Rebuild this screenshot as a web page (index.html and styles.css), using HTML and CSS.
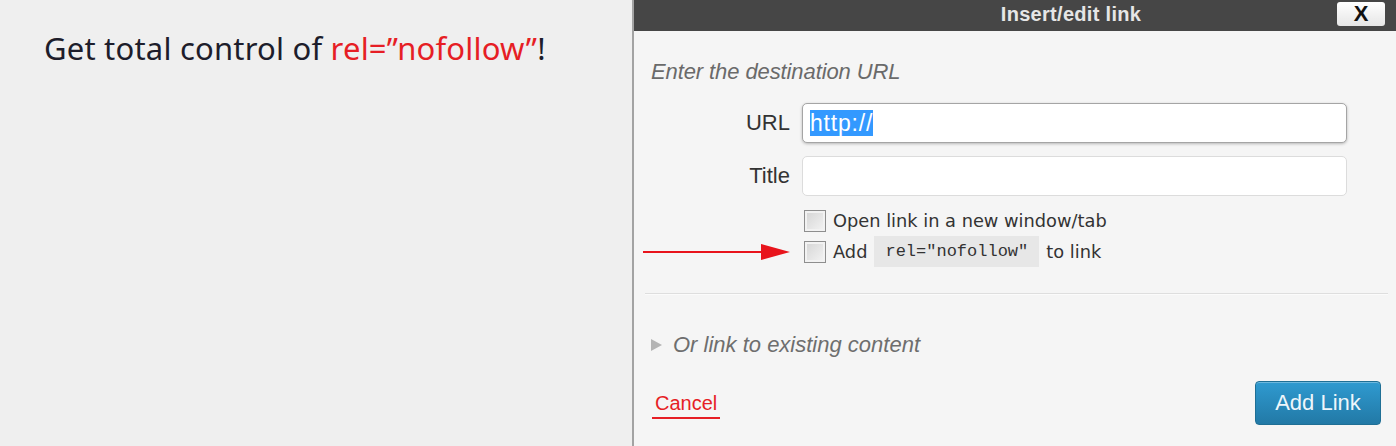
FILE: index.html
```html
<!DOCTYPE html>
<html lang="en">
<head>
    <meta charset="UTF-8">
    <meta name="viewport" content="width=device-width, initial-scale=1.0">
    <title>Insert/edit link</title>
    <link rel="stylesheet" href="styles.css">
</head>
<body>
    <div class="page">
        <div class="pitch">
            <h1>Get total control of <span class="hot">rel=”nofollow”</span>!</h1>
        </div>

        <div class="dialog">
            <div class="titlebar">
                <span class="title">Insert/edit link</span>
                <button class="close">X</button>
            </div>

            <div class="body">
                <p class="intro">Enter the destination URL</p>

                <div class="fields">
                    <label class="fieldLabel">URL</label>
                    <div class="input focused"><span class="selected">http://</span></div>
                    <label class="fieldLabel">Title</label>
                    <div class="input"></div>
                </div>

                <div class="checks">
                    <div class="pointer"></div>
                    <div class="checkRow"><span class="box"></span>Open link in a new window/tab</div>
                    <div class="pointer">
                        <!-- red arrow pointing at the nofollow option -->
                        <svg width="147" height="18" viewBox="0 0 147 18">
                            <line x1="0" y1="9" x2="122" y2="9" stroke="#e8141c" stroke-width="2"/>
                            <polygon points="118,1 147,9 118,17" fill="#e8141c"/>
                        </svg>
                    </div>
                    <div class="checkRow"><span class="box"></span>Add <code>rel="nofollow"</code> to link</div>
                </div>

                <hr class="divider">

                <div class="toggle"><span class="tri"></span>Or link to existing content</div>

                <div class="footer">
                    <a class="cancel" href="#">Cancel</a>
                    <button class="submit">Add Link</button>
                </div>
            </div>
        </div>
    </div>
</body>
</html>
```

FILE: styles.css
```css
* {
    box-sizing: border-box;
}

body {
    margin: 0;
    background: #efefef;
    font-family: "Liberation Sans", Arial, sans-serif;
}

.page {
    display: flex;
    height: 446px;
}

.pitch {
    width: 632px;
    padding: 29px 0 0 44px;
}

.pitch h1 {
    margin: 0;
    font-family: "Noto Sans", "Open Sans", sans-serif;
    font-weight: normal;
    font-size: 31px;
    line-height: 38px;
    color: #1d1d2b;
    letter-spacing: 0.2px;
}

.hot {
    color: #e61e25;
}

.dialog {
    flex: 1;
    background: #f5f5f5;
    border-left: 2px solid #a3a3a3;
    display: flex;
    flex-direction: column;
}

.titlebar {
    height: 31px;
    background: #464646;
    display: flex;
    align-items: flex-start;
    justify-content: center;
    padding-left: 112px;
    position: relative;
}

.title {
    color: #e6e6e6;
    font-weight: bold;
    font-size: 20px;
    line-height: 28px;
    letter-spacing: 0.3px;
}

.close {
    position: absolute;
    right: 11px;
    top: 2px;
    width: 48px;
    height: 24px;
    border: none;
    border-radius: 3px;
    background: linear-gradient(#ffffff, #e6e6e6);
    font-family: "Liberation Sans", Arial, sans-serif;
    font-weight: bold;
    font-size: 22px;
    line-height: 24px;
    color: #111;
    padding: 0;
}

.body {
    padding: 0 8px 0 0;
}

.intro {
    margin: 29px 0 0 17px;
    font-style: italic;
    font-size: 22px;
    line-height: 24px;
    color: #6a6a6a;
    letter-spacing: -0.1px;
}

.fields {
    display: grid;
    grid-template-columns: 156px 545px;
    column-gap: 12px;
    row-gap: 13px;
    margin-top: 19px;
}

.fieldLabel {
    text-align: right;
    font-size: 22px;
    line-height: 40px;
    color: #333;
}

.input {
    height: 40px;
    background: #fff;
    border: 1px solid #dcdcdc;
    border-radius: 5px;
    padding: 6px 7px;
    font-size: 23px;
    line-height: 26px;
}

.input.focused {
    border-color: #a5a5a5;
    box-shadow: 0 1px 3px rgba(0, 0, 0, 0.25);
}

.selected {
    background: #3399ff;
    color: #fff;
    letter-spacing: 0.8px;
}

.checks {
    display: grid;
    grid-template-columns: 156px auto;
    grid-auto-rows: 31px;
    column-gap: 14px;
    margin-top: 9px;
}

.pointer {
    display: flex;
    align-items: center;
    justify-content: flex-end;
}

.checkRow {
    display: flex;
    align-items: center;
    font-family: "DejaVu Sans", Tahoma, sans-serif;
    font-size: 17.8px;
    color: #333;
}

.box {
    width: 22px;
    height: 22px;
    border: 1px solid #8e8e8e;
    background: linear-gradient(135deg, #d4d4d4, #f4f4f4);
    box-shadow: inset 0 0 0 2px #f2f2f2;
    margin-right: 7px;
}

code {
    font-family: "Liberation Mono", "Courier New", monospace;
    font-size: 17px;
    background: #e7e7e7;
    line-height: 31px;
    padding: 0 11px;
    margin: 0 7px;
    color: #333;
}

.divider {
    margin: 26px 0 0 11px;
    border: none;
    border-top: 1px solid #dedede;
    border-bottom: 1px solid #fbfbfb;
}

.toggle {
    margin: 38px 0 0 17px;
    display: flex;
    align-items: center;
    font-style: italic;
    font-size: 22px;
    line-height: 24px;
    color: #6e6e6e;
}

.tri {
    width: 0;
    height: 0;
    border-top: 6px solid transparent;
    border-bottom: 6px solid transparent;
    border-left: 11px solid #b4b4b4;
    margin-right: 11px;
}

.footer {
    margin: 24px 7px 0 18px;
    display: flex;
    justify-content: space-between;
    align-items: center;
    height: 44px;
}

.cancel {
    color: #e61e25;
    text-decoration: none;
    font-size: 20px;
    line-height: 24px;
    padding: 0 3px 2px 3px;
    border-bottom: 2px solid #e61e25;
    margin-top: 4px;
}

.submit {
    width: 126px;
    height: 44px;
    border: 1px solid #1f6f95;
    border-radius: 4px;
    background: linear-gradient(#2f9ad0, #2279a6);
    box-shadow: inset 0 1px 0 rgba(255, 255, 255, 0.3);
    color: #eef6fb;
    font-family: "Liberation Sans", Arial, sans-serif;
    font-size: 22px;
}
```
